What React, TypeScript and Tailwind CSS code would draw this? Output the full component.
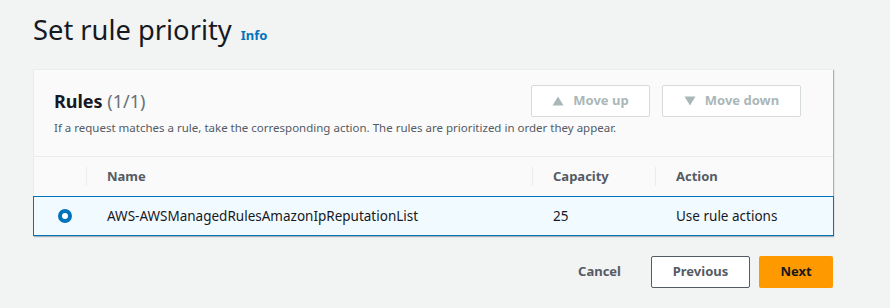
export default function App() {
  return (
    <div className="w-[890px] h-[308px] bg-[#f2f3f3] font-['Noto_Sans',sans-serif] text-[#16191f] overflow-hidden">
      <div className="pl-[33px] pr-[57px]">
        {/* Title */}
        <div className="flex items-baseline gap-[9px] pt-[12px] h-[69px]">
          <h1 className="text-[27.3px] leading-[36px] font-normal text-[#16191f]">Set rule priority</h1>
          <a className="text-[13px] font-bold text-[#0073bb]">Info</a>
        </div>

        {/* Rules container */}
        <div className="w-[800px] bg-[#fafafa] border-t border-l border-[#eaeded] shadow-[1px_1px_1px_0_rgba(0,28,36,0.3)]">
          <div className="pl-[20px] pr-[32px] pt-[15px] pb-[20px] border-b border-[#eaeded]">
            <div className="flex justify-between">
              <h2 className="text-[18px] leading-[30px] font-bold mt-[1px]">
                Rules <span className="font-normal text-[#687078]">(1/1)</span>
              </h2>
              <div className="flex gap-[12px] h-[32px]">
                <button className="w-[119px] h-[32px] border border-[#d5dbdb] bg-white rounded-[2px] flex items-center justify-center gap-[9px] text-[13px] font-bold text-[#aab7b8]">
                  <svg width="12" height="10" viewBox="0 0 12 10"><path d="M6 0.5 L11.5 9.5 L0.5 9.5 Z" fill="#aab7b8" /></svg>
                  Move up
                </button>
                <button className="w-[139px] h-[32px] border border-[#d5dbdb] bg-white rounded-[2px] flex items-center justify-center gap-[9px] text-[13px] font-bold text-[#aab7b8]">
                  <svg width="12" height="10" viewBox="0 0 12 10"><path d="M0.5 0.5 L11.5 0.5 L6 9.5 Z" fill="#aab7b8" /></svg>
                  Move down
                </button>
              </div>
            </div>
            <p className="text-[11.5px] leading-[16px] text-[#545b64] whitespace-nowrap mt-[3px]">
              If a request matches a rule, take the corresponding action. The rules are prioritized in order they appear.
            </p>
          </div>

          {/* Table */}
          <div className="grid grid-cols-[53px_446px_123px_1fr] h-[39px] items-center text-[13px] font-bold text-[#545b64]">
            <div className="h-[19px] border-r border-[#eaeded]" />
            <div className="pl-[20px] h-[19px] leading-[19px] border-r border-[#eaeded]">Name</div>
            <div className="pl-[20px] h-[19px] leading-[19px] border-r border-[#eaeded]">Capacity</div>
            <div className="pl-[20px] h-[19px] leading-[19px]">Action</div>
          </div>
          <div className="grid grid-cols-[53px_446px_123px_1fr] h-[40px] items-center text-[13.5px] bg-[#f1faff] border border-[#0073bb] -ml-px -mr-px text-[#16191f]">
            <div className="flex justify-end pr-[15px]">
              <span className="w-[14px] h-[14px] rounded-full border-[4px] border-[#0073bb] bg-white" />
            </div>
            <div className="pl-[20px]">AWS-AWSManagedRulesAmazonIpReputationList</div>
            <div className="pl-[20px]">25</div>
            <div className="pl-[20px]">Use rule actions</div>
          </div>
        </div>

        {/* Footer */}
        <div className="w-[800px] flex justify-end items-center gap-[9px] mt-[20px]">
          <button className="h-[32px] px-[20px] text-[13px] font-bold text-[#545b64]">Cancel</button>
          <button className="w-[99px] h-[32px] border border-[#545b64] bg-white rounded-[2px] text-[13px] font-bold text-[#545b64] ml-[1px]">Previous</button>
          <button className="w-[74px] h-[32px] bg-[#ff9900] rounded-[2px] text-[13px] font-bold text-[#16191f]">Next</button>
        </div>
      </div>
    </div>
  );
}
